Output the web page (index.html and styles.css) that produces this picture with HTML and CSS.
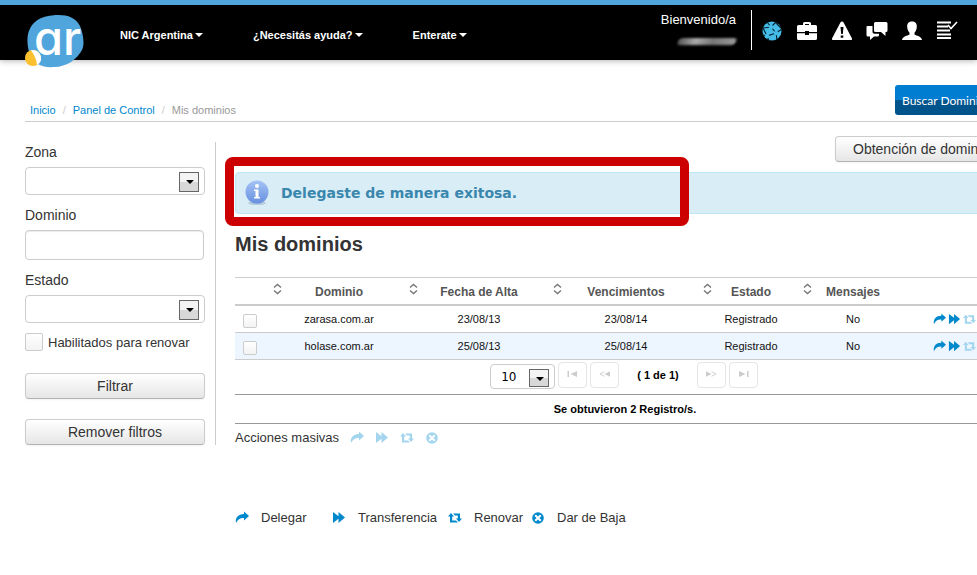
FILE: index.html
```html
<!DOCTYPE html>
<html lang="es">
<head>
<meta charset="utf-8">
<title>Mis dominios</title>
<link rel="stylesheet" href="styles.css">
</head>
<body>
<svg class="defs" aria-hidden="true">
  <symbol id="share" viewBox="0 0 14 14"><path d="M9 .500l5 4.500-5 4.500V7C5.500 6.700 3 8 1 12 0 6.500 3.500 2.900 9 3z"/></symbol>
  <symbol id="forward" viewBox="0 0 14 14"><path d="M1 1l5.500 4.200V1L13 6.500 6.500 12V7.800L1 12z"/></symbol>
  <symbol id="retweet" viewBox="0 0 14 14"><path d="M3 2L6 5.500H4.200v4H8l2 2H2v-6H0zM5 2.500h7v5h2L11 11 8 7.500h1.800v-3H7z"/></symbol>
  <symbol id="remove" viewBox="0 0 14 14"><path fill-rule="evenodd" d="M7 1.200a5.800 5.800 0 1 0 0 11.600A5.800 5.800 0 0 0 7 1.200zM4.900 3.500L7 5.600l2.100-2.100 1.400 1.400L8.400 7l2.100 2.100-1.400 1.400L7 8.400l-2.100 2.100-1.400-1.400L5.600 7 3.500 4.900z"/></symbol>
  <symbol id="sort" viewBox="0 0 9 12"><path d="M1 4.500L4.500 1.500 8 4.500M1 7.500L4.500 10.500 8 7.500" fill="none" stroke="#777" stroke-width="1.400"/></symbol>
</svg>
<header class="topbar">
  <a class="logo" href="#" aria-label="NIC Argentina">
    <svg viewBox="0 0 59 53" width="59" height="53">
      <path d="M27 .500C39-1 50 1 55 11c3 7 5 18 2 24-5 9-15 17-28 17C17 53 6 48 4 37 1 25 2 14 10 7 15 3 20 1 27 .500z" fill="#4fa5dc"/>
      <circle cx="8" cy="43" r="8" fill="#fbc02d"/>
      <path d="M6 35.300C12 34 17 39 16 45c-.500 2-2 4-4 5-.500-6-3-10.500-6-14.700z" fill="#fff"/>
      <text x="9" y="40" class="logo-text">ar</text>
    </svg>
  </a>
  <nav class="menu">
    <a href="#">NIC Argentina<i class="caret"></i></a>
    <a href="#">¿Necesitás ayuda?<i class="caret"></i></a>
    <a href="#">Enterate<i class="caret"></i></a>
  </nav>
  <div class="user"><span>Bienvenido/a</span><div class="user-name"></div></div>
  <div class="tools">
    <a href="#" aria-label="Dominios"><svg viewBox="0 0 22 22"><circle cx="11" cy="11" r="9.500" fill="#45bce8"/><path d="M2 8l8-1 5 6-9 3zM10 7l5-5M15 13l1 7M15 13l6-4M6 16l2 5M6 16L2 8M10 7L6 2M6 16l-4-1M15 3l5 5" fill="none" stroke="#06202c" stroke-width="1.100"/><g fill="#45bce8"><circle cx="10" cy="7" r="2.200"/><circle cx="15" cy="13" r="2.200"/><circle cx="6" cy="16" r="2.200"/></g></svg></a>
    <a href="#" aria-label="Trámites"><svg viewBox="0 0 22 22"><path fill-rule="evenodd" d="M7 5V3.500Q7 2 8.500 2h5Q15 2 15 3.500V5h4.500Q21 5 21 6.500V12h-8v-1H9v1H1V6.500Q1 5 2.500 5zm2 0h4V4H9zM1 13.200h8V15h4v-1.800h8v5.300q0 1.500-1.500 1.500h-17Q1 20 1 18.500z"/></svg></a>
    <a href="#" aria-label="Alertas"><svg viewBox="0 0 22 22"><path fill-rule="evenodd" d="M11 1.500q1 0 1.600 1L21 18.500q.500 1.500-1 1.500H2q-1.500 0-1-1.500l8.400-16q.600-1 1.600-1zM9.500 7l.700 7h1.600l.700-7zM9.700 15.500v2.300h2.600v-2.300z"/></svg></a>
    <a href="#" aria-label="Mensajes"><svg viewBox="0 0 22 22"><path d="M9.500 2H20q1.500 0 1.500 1.500v7Q21.500 12 20 12h-.500v4L15 12H9.500Q8 12 8 10.500v-7Q8 2 9.500 2z"/><path d="M1.500 6H6.500v6q0 1.800 1.800 1.800H13V15q0 1.500-1.500 1.500H8L4 20v-3.500H2Q.500 16.500.500 15V7q0-1 1-1z"/></svg></a>
    <a href="#" aria-label="Perfil"><svg viewBox="0 0 22 22"><path d="M11 1.500c4 0 5 2.500 4.800 5.500-.200 3-1.300 4.500-2.300 5.700v1.800c2 1.500 7 1.500 7.500 5.500H1c.500-4 5.500-4 7.500-5.500v-1.800C7.500 11.500 6.400 10 6.200 7 6 4 7 1.500 11 1.500z"/></svg></a>
    <a href="#" aria-label="Pendientes"><svg viewBox="0 0 22 22"><path d="M1 1.500h14v2H1zM1 5.500h11v2H1zM1 9.500h13v2H1zM1 13.500h14v2H1zM1 17h14v2H1z"/><path d="M12 5l3 3.500L21 2" fill="none" stroke="#fff" stroke-width="1.600"/></svg></a>
  </div>
</header>

<div class="page">
  <div class="crumb-bar">
    <nav class="crumbs"><a href="#">Inicio</a><i>/</i><a href="#">Panel de Control</a><i>/</i><span>Mis dominios</span></nav>
    <button class="search" type="button">Buscar Dominios</button>
  </div>
  <div class="columns">
    <form class="filters">
      <label for="zona">Zona</label>
      <div class="select"><select id="zona"><option></option></select></div>
      <label for="dominio">Dominio</label>
      <input id="dominio" class="text" type="text">
      <label for="estado">Estado</label>
      <div class="select"><select id="estado"><option></option></select></div>
      <div class="check-row"><input id="renovar" class="check" type="checkbox"><label for="renovar">Habilitados para renovar</label></div>
      <button class="btn" type="button">Filtrar</button>
      <button class="btn" type="button">Remover filtros</button>
    </form>
    <main>
      <button class="btn obtain" type="button">Obtención de dominios</button>
      <div class="alert" role="status">
        <svg viewBox="0 0 24 26" width="24" height="26">
          <defs><linearGradient id="info" x2="0" y2="1"><stop stop-color="#a5c3f5"/><stop offset="1" stop-color="#6690df"/></linearGradient></defs>
          <ellipse cx="12" cy="23" rx="9" ry="2" fill="#b5cbd9"/><circle cx="12" cy="12" r="11.500" fill="url(#info)"/>
          <circle cx="12" cy="6" r="2" fill="#fff"/><path d="M9 9.500h4.500V17H15v1.500H9V17h1.500v-6H9z" fill="#fff"/>
        </svg>
        <span>Delegaste de manera exitosa.</span>
        <div class="highlight"></div>
      </div>
      <h1>Mis dominios</h1>
      <table>
        <colgroup><col class="c-check"><col class="c-domain"><col class="c-start"><col class="c-end"><col class="c-state"><col class="c-msg"><col></colgroup>
        <thead><tr>
          <th></th>
          <th><div class="sort"><svg><use href="#sort"/></svg>Dominio</div></th>
          <th><div class="sort"><svg><use href="#sort"/></svg>Fecha de Alta</div></th>
          <th><div class="sort"><svg><use href="#sort"/></svg>Vencimientos</div></th>
          <th><div class="sort"><svg><use href="#sort"/></svg>Estado</div></th>
          <th><div class="sort"><svg><use href="#sort"/></svg>Mensajes</div></th>
          <th></th>
        </tr></thead>
        <tbody>
          <tr><td><input class="check small" type="checkbox" aria-label="zarasa.com.ar"></td><td>zarasa.com.ar</td><td>23/08/13</td><td>23/08/14</td><td>Registrado</td><td>No</td>
            <td><div class="actions"><svg><use href="#share"/></svg><svg><use href="#forward"/></svg><svg class="off"><use href="#retweet"/></svg><svg class="off"><use href="#remove"/></svg></div></td></tr>
          <tr class="alt"><td><input class="check small" type="checkbox" aria-label="holase.com.ar"></td><td>holase.com.ar</td><td>25/08/13</td><td>25/08/14</td><td>Registrado</td><td>No</td>
            <td><div class="actions"><svg><use href="#share"/></svg><svg><use href="#forward"/></svg><svg class="off"><use href="#retweet"/></svg><svg class="off"><use href="#remove"/></svg></div></td></tr>
        </tbody>
        <tfoot>
          <tr><td colspan="7"><div class="pager">
            <div class="select size"><select aria-label="Filas por página"><option>10</option></select></div>
            <button type="button" disabled aria-label="Primera"><svg viewBox="0 0 10 6"><path d="M0 0h1.500v6H0zM9.500 0v6L3 3z"/></svg></button>
            <button type="button" disabled aria-label="Anterior"><svg viewBox="0 0 12 6"><path d="M12 0v6L6 3z"/><path d="M6 .500L1 3l5 2.500" class="open"/></svg></button>
            <b>( 1 de 1)</b>
            <button type="button" disabled aria-label="Siguiente"><svg viewBox="0 0 12 6"><path d="M0 0v6l6-3z"/><path d="M6 .500L11 3 6 5.500" class="open"/></svg></button>
            <button type="button" disabled aria-label="Última"><svg viewBox="0 0 10 6"><path d="M8.500 0H10v6H8.500zM.500 0v6L7 3z"/></svg></button>
          </div></td></tr>
          <tr><td colspan="7" class="total">Se obtuvieron 2 Registro/s.</td></tr>
        </tfoot>
      </table>
      <div class="bulk"><span>Acciones masivas</span><svg><use href="#share"/></svg><svg><use href="#forward"/></svg><svg><use href="#retweet"/></svg><svg><use href="#remove"/></svg></div>
      <div class="legend">
        <span><svg><use href="#share"/></svg>Delegar</span>
        <span><svg><use href="#forward"/></svg>Transferencia</span>
        <span><svg><use href="#retweet"/></svg>Renovar</span>
        <span><svg><use href="#remove"/></svg>Dar de Baja</span>
      </div>
    </main>
  </div>
</div>
</body>
</html>
```
FILE: styles.css
```css
* { box-sizing: border-box; }
html { overflow-x: hidden; }
body { margin: 0; overflow-x: hidden; background: #fff; color: #333; font: 14px/20px "Liberation Sans", Arial, sans-serif; }
button, input, select { font: inherit; color: inherit; margin: 0; }
a { color: #0088cc; text-decoration: none; }
.defs { position: absolute; width: 0; height: 0; }

.topbar { display: flex; align-items: flex-start; height: 60px; border-top: 5px solid #4fa5dc; background: #000; box-shadow: 0 1px 6px rgba(0, 0, 0, .3); padding: 0 19px 0 25px; }
.logo { width: 59px; margin: 10px 36px 0 0; }
.logo svg { display: block; }
.logo-text { font: 500 47px Inter, sans-serif; font-feature-settings: "cv11"; fill: #fff; }
.menu { display: flex; gap: 50px; margin-top: 20px; font-size: 11px; font-weight: bold; }
.menu a { display: flex; align-items: center; gap: 2px; color: #fff; white-space: nowrap; }
.caret { border: 4px solid transparent; border-top-color: #fff; border-bottom: 0; }
.user { margin: 5px 0 0 auto; height: 40px; padding-right: 15px; border-right: 1px solid #fff; color: #fff; font-size: 13px; }
.user-name { width: 58px; height: 7px; margin: 8px 0 0 auto; border-radius: 4px; background: linear-gradient(90deg, #555, #aaa 30%, #777 60%, #999); filter: blur(1px); transform: skewX(-20deg); }
.tools { display: flex; gap: 13px; margin: 15px 0 0 9px; }
.tools svg { display: block; width: 22px; height: 22px; fill: #fff; }

.page { min-width: 1015px; padding: 25px 0 40px 25px; }
.crumb-bar { display: flex; justify-content: space-between; height: 37px; border-bottom: 1px solid #ccc; }
.crumbs { display: flex; align-self: flex-end; gap: 7px; padding: 0 0 1px 5px; font-size: 11px; color: #999; }
.crumbs i { color: #ccc; font-style: normal; }
.search { width: 120px; height: 30px; padding: 0 7px; border: 0; border-radius: 3px; background: linear-gradient(#007dd1 50%, #00548c 50%); color: #fff; font: 12px Lato, sans-serif; text-align: left; white-space: nowrap; }

.columns { display: grid; grid-template-columns: 191px minmax(0, 1fr); align-items: start; gap: 19px; }
.filters { display: flex; flex-direction: column; margin-top: 20px; padding-right: 10px; border-right: 1px solid #ccc; }
.filters > label { margin-bottom: 5px; }
.select { position: relative; height: 28px; margin-bottom: 10px; }
.select select { width: 100%; height: 100%; appearance: none; border: 1px solid #ccc; border-radius: 4px; background: #fff; }
.select::before { content: ""; position: absolute; right: 6px; top: 5px; width: 18px; height: 18px; border: 1px solid #666; background: linear-gradient(#f4f4f4 50%, #d8d8d8 50%); pointer-events: none; }
.select::after { content: ""; position: absolute; right: 11px; top: 13px; border: 4px solid transparent; border-width: 4px 4px 0; border-top-color: #000; pointer-events: none; }
.text { width: 179px; height: 30px; margin-bottom: 10px; border: 1px solid #ccc; border-radius: 4px; box-shadow: inset 0 1px 1px rgba(0, 0, 0, .08); }
.check-row { display: flex; gap: 5px; font-size: 13px; }
.check { appearance: none; width: 18px; height: 18px; border: 1px solid #ccc; border-radius: 2px; background: linear-gradient(#fff, #f3f3f3); }
.check.small { display: block; width: 14px; height: 14px; margin: 3px 0 0 8px; }
.btn { height: 26px; padding: 0 17px; border: 1px solid #ccc; border-bottom-color: #b3b3b3; border-radius: 4px; background: linear-gradient(#fff, #e6e6e6); box-shadow: 0 1px 2px rgba(0, 0, 0, .05); line-height: 20px; white-space: nowrap; }
.filters .btn { margin-top: 20px; }

main { margin-top: 14px; }
.obtain { display: block; width: 180px; margin-left: auto; text-align: left; }
.alert { position: relative; display: flex; align-items: center; gap: 12px; height: 42px; margin-top: 10px; padding: 0 9px; border: 1px solid #bce8f1; border-radius: 4px; background: #d9edf7; color: #3a87ad; font: bold 14px "DejaVu Sans", Verdana, sans-serif; }
.highlight { position: absolute; left: -11px; top: -16px; width: 464px; height: 69px; border: 9px solid #c00; border-radius: 8px; }
h1 { margin: 10px 0 13px; font-size: 20px; line-height: 40px; }

table { width: 100%; table-layout: fixed; border-collapse: separate; border-spacing: 0; color: #111; font-size: 11px; }
.c-check { width: 36px; }
.c-domain { width: 136px; }
.c-start { width: 144px; }
.c-end { width: 150px; }
.c-state { width: 100px; }
.c-msg { width: 104px; }
th, td { padding: 0; text-align: center; border-bottom: 1px solid #ccc; }
th { height: 29px; border-top: 1px solid #ccc; border-bottom-width: 2px; color: #555; font-size: 12px; }
tbody td { height: 27px; }
.alt td { background: #edf5ff; }
.sort { display: grid; grid-template-columns: 9px 1fr 9px; padding: 2px 2px 0; align-items: center; white-space: nowrap; }
.sort svg { width: 9px; height: 12px; margin-bottom: 6px; }
.actions { display: flex; gap: 2px; padding-left: 28px; }
.actions svg, .bulk svg, .legend svg { flex: none; width: 14px; height: 14px; fill: #0088cc; }
.actions svg { width: 13px; height: 13px; }
.actions .off, .bulk svg { fill: #a3d5ef; }
tfoot td { border-bottom-color: #999; }
.pager { display: flex; justify-content: center; gap: 3px; height: 34px; padding: 2px 2px 0 0; }
.pager button { display: grid; place-items: start center; width: 29px; height: 26px; padding: 8px 0 0; border: 1px solid #e5e5e5; border-radius: 4px; background: #fff; }
.pager button svg { width: 11px; height: 6px; fill: #ccc; }
.pager .open { fill: none; stroke: #ccc; }
.pager b { padding: 3px 15px; color: #000; }
.size { width: 65px; height: 25px; margin: 2px 0 0; font: 12px "DejaVu Sans", Verdana, sans-serif; }
.size select { padding: 0 10px; color: #000; }
.size::before { height: 16px; }
.total { height: 29px; color: #000; font-weight: bold; }
.bulk { display: flex; align-items: center; gap: 11px; margin-top: 4px; font-size: 13px; }
.legend { display: grid; grid-template-columns: 97px 116px 83px auto; margin-top: 60px; font-size: 13px; }
.legend span { display: flex; align-items: center; gap: 12px; white-space: nowrap; }
```
